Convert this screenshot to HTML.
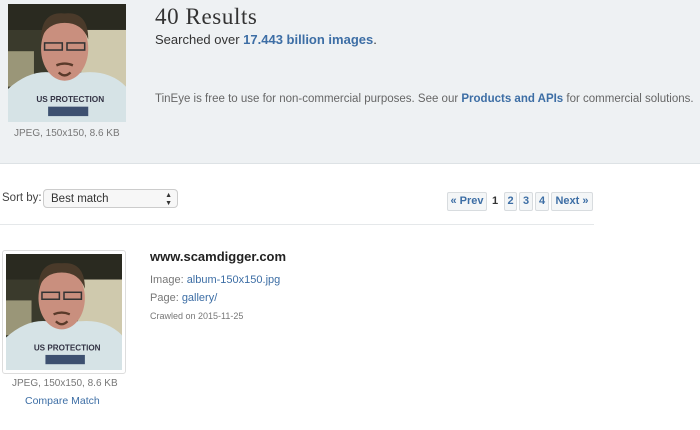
<!DOCTYPE html>
<html><head><meta charset="utf-8"><style>
*{margin:0;padding:0;box-sizing:border-box}
body{width:700px;height:430px;overflow:hidden;background:#fff;font-family:"Liberation Sans",sans-serif;color:#555;position:relative}
.hdr{position:absolute;left:0;top:0;width:700px;height:164px;background:#eef1f3;border-bottom:1px solid #dde2e5}
.abs{position:absolute;white-space:nowrap}
a,.lnk{color:#3d6ea5;text-decoration:none}
.pg{position:absolute;top:192px;height:19px;border:1px solid #d8dcdf;background:#f4f6f7;border-radius:2px;font-size:11px;font-weight:bold;color:#3d6ea5;text-align:center;line-height:17px}
</style></head><body>
<svg width="0" height="0" style="position:absolute"><defs>
<g id="ph">
<rect width="100" height="100" fill="#3a3a2c"/>
<rect x="0" y="0" width="100" height="22" fill="#2a2a20"/>
<rect x="62" y="22" width="38" height="48" fill="#cfc9ad"/>
<rect x="0" y="40" width="22" height="30" fill="#9a9678"/>
<path d="M0 72 Q18 56 36 58 L64 58 Q86 56 100 70 L100 100 L0 100Z" fill="#d6e3e6"/>
<ellipse cx="48" cy="38" rx="20" ry="27" fill="#c98f7e"/>
<path d="M28 30 Q28 6 48 8 Q68 6 68 30 Q63 16 48 16 Q33 16 28 30Z" fill="#4a3a2a"/>
<rect x="31" y="33" width="15" height="6" fill="none" stroke="#333" stroke-width="1.3"/>
<rect x="50" y="33" width="15" height="6" fill="none" stroke="#333" stroke-width="1.3"/>
<path d="M41 52 Q48 49 55 52 M43 58 Q48 63 53 58" stroke="#5a3a2a" stroke-width="2" fill="none"/>
<text x="24" y="83" font-size="7" font-weight="bold" fill="#334" font-family="Liberation Sans">US PROTECTION</text>
<rect x="34" y="87" width="34" height="8" fill="#3d5070"/>
</g></defs></svg>
<div class="hdr"></div>
<svg class="abs" style="left:8px;top:4px" width="118" height="118" viewBox="0 0 100 100"><use href="#ph"/></svg>
<div class="abs" style="left:14px;top:128px;font-size:10px;color:#777">JPEG, 150x150, 8.6 KB</div>
<div class="abs" style="left:155px;top:4px;font-family:'Liberation Serif',serif;font-size:23px;color:#333;letter-spacing:0.6px">40 Results</div>
<div class="abs" style="left:155px;top:32px;font-size:13px;color:#333">Searched over <b class="lnk">17.443 billion images</b>.</div>
<div class="abs" style="left:155px;top:93px;font-size:11.5px;color:#666">TinEye is free to use for non-commercial purposes. See our <b class="lnk">Products and APIs</b> for commercial solutions.</div>

<div class="abs" style="left:2px;top:192px;font-size:11.5px;color:#444">Sort by:</div>
<div class="abs" style="left:43px;top:189px;width:135px;height:19px;border:1px solid #ccc;border-radius:4px;background:#f7f7f7;font-size:11.5px;color:#333;line-height:18px;padding-left:7px">Best match<span style="position:absolute;right:5px;font-size:7px;line-height:8px;top:2px">▲<br>▼</span></div>
<div class="pg" style="left:447px;width:40px">« Prev</div>
<div class="abs" style="left:492px;top:195px;font-size:11px;font-weight:bold;color:#333">1</div>
<div class="pg" style="left:504px;width:13px">2</div>
<div class="pg" style="left:519px;width:14px">3</div>
<div class="pg" style="left:535px;width:14px">4</div>
<div class="pg" style="left:551px;width:42px">Next »</div>
<div class="abs" style="left:0;top:224px;width:594px;height:1px;background:#e5e8ea"></div>

<div class="abs" style="left:2px;top:250px;width:124px;height:124px;border:1px solid #ddd;border-radius:3px;background:#fff"></div>
<svg class="abs" style="left:6px;top:254px" width="116" height="116" viewBox="0 0 100 100"><use href="#ph"/></svg>
<div class="abs" style="left:12px;top:378px;font-size:10px;color:#777">JPEG, 150x150, 8.6 KB</div>
<div class="abs lnk" style="left:25px;top:395px;font-size:10.5px">Compare Match</div>
<div class="abs" style="left:150px;top:249px;font-size:13px;font-weight:bold;color:#222">www.scamdigger.com</div>
<div class="abs" style="left:150px;top:274px;font-size:11px;color:#777">Image: <span class="lnk">album-150x150.jpg</span></div>
<div class="abs" style="left:150px;top:292px;font-size:11px;color:#777">Page: <span class="lnk">gallery/</span></div>
<div class="abs" style="left:150px;top:311px;font-size:9px;color:#777">Crawled on 2015-11-25</div>
</body></html>
